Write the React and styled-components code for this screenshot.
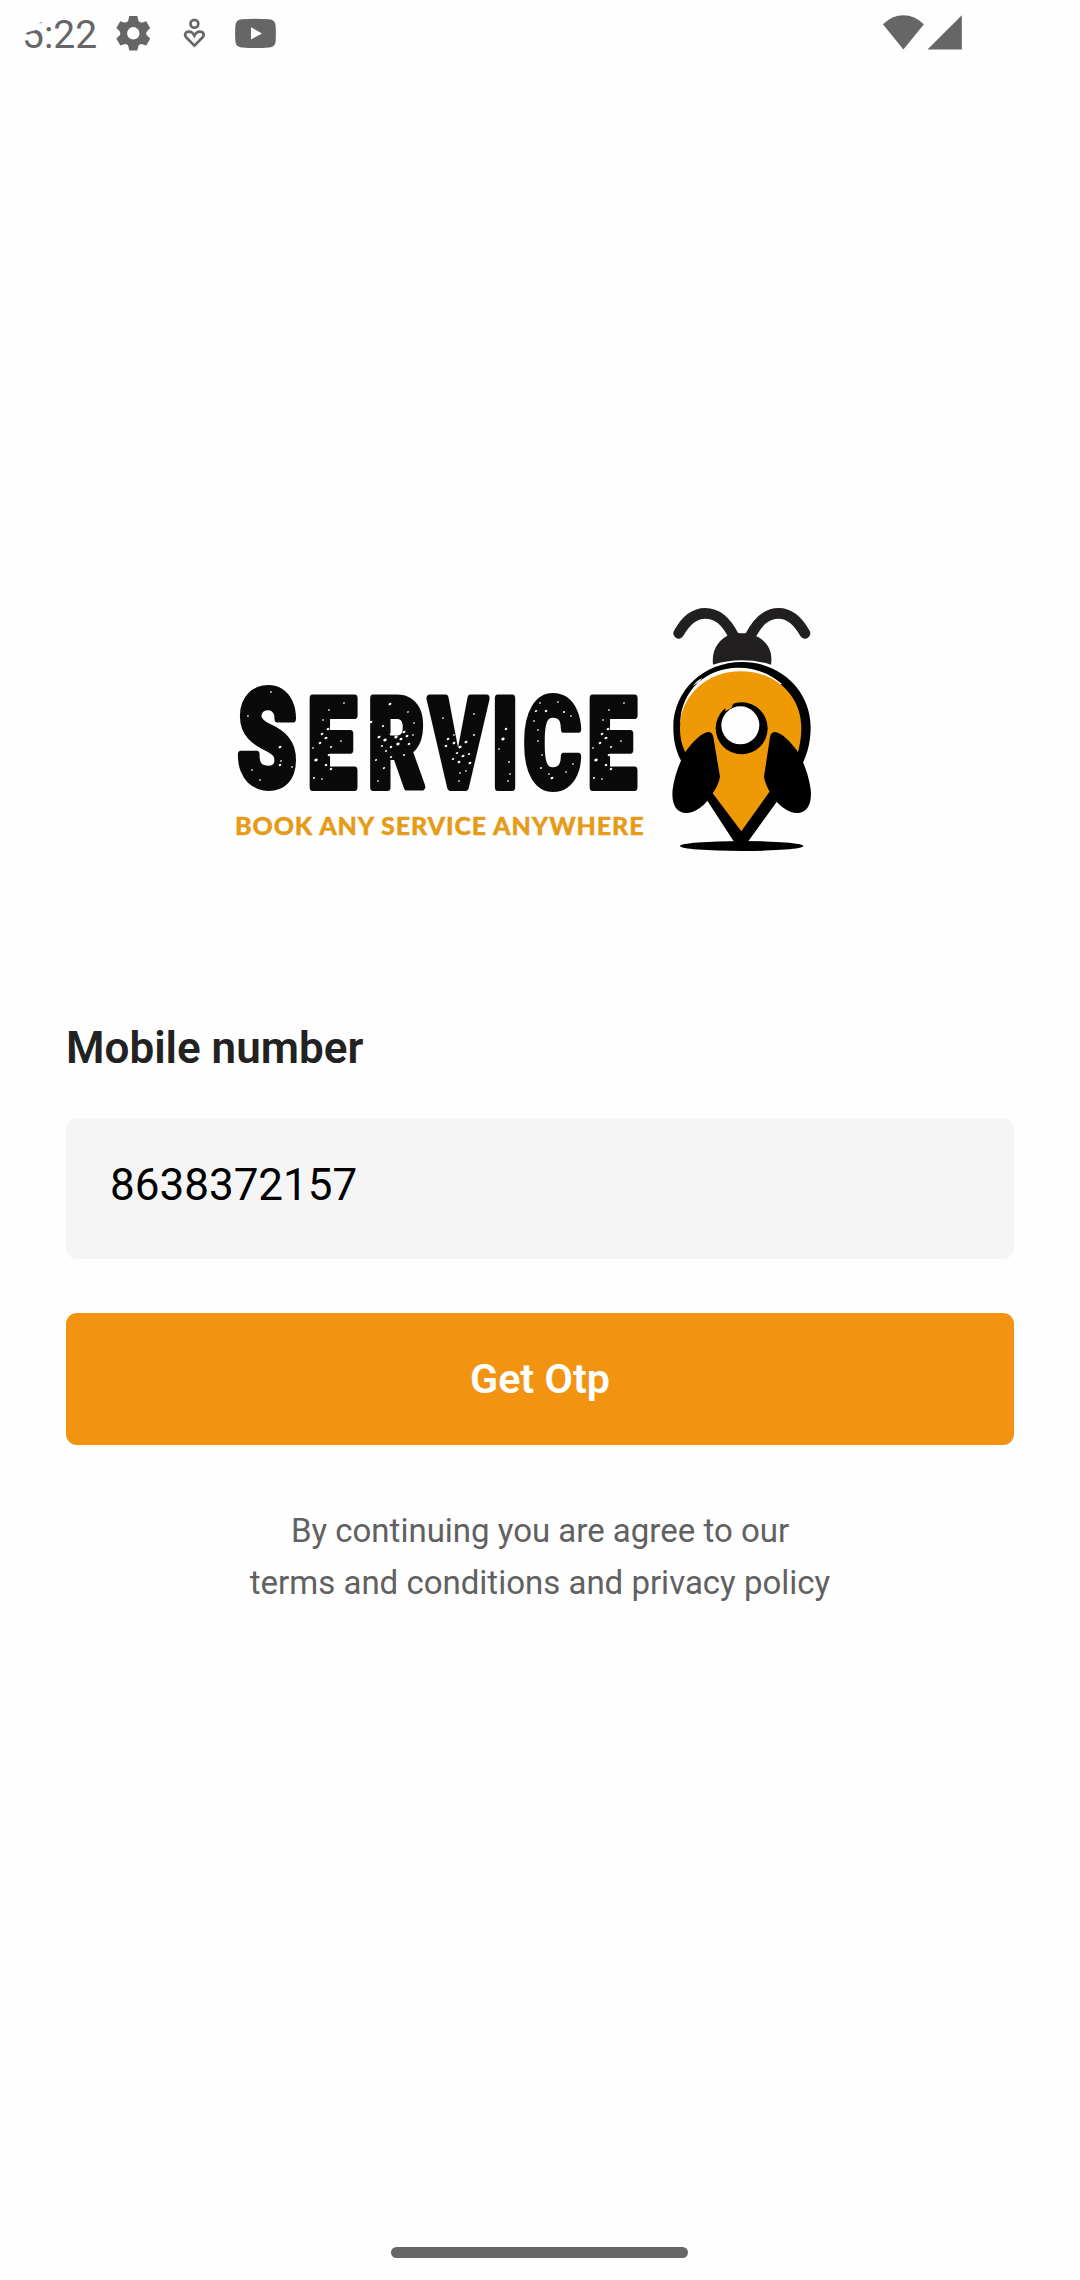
import React from 'react';
import styled, { createGlobalStyle } from 'styled-components';

const GlobalStyle = createGlobalStyle`
  * { box-sizing: border-box; }
  body { margin: 0; background: #fefefe; font-family: Roboto, "Liberation Sans", sans-serif; }
`;

const Screen = styled.main`
  width: 1080px;
  height: 2280px;
  background: #fefefe;
  display: flex;
  flex-direction: column;
  overflow: hidden;
`;

const StatusBar = styled.header`
  height: 66px;
  padding: 0 118px 0 22px;
  display: flex;
  justify-content: space-between;
  align-items: flex-start;
  color: #666;
`;

const StatusGroup = styled.div`
  height: 66px;
  display: flex;
  align-items: center;
`;

const Clock = styled.span`
  position: relative;
  width: 94px;
  height: 66px;
  padding-top: 2px;
  font-size: 39px;
  line-height: 66px;
`;

const CornerCut = styled.svg`
  position: absolute;
  left: -2px;
  top: 12px;
`;

const Glyph = styled.svg`
  display: block;
  flex: none;
  height: 66px;
  width: ${({ $w }) => $w}px;
`;

const Content = styled.section`
  flex: 1;
  padding: 530px 66px 0;
  display: flex;
  flex-direction: column;
`;

const Logo = styled.svg`
  display: block;
  width: 600px;
  height: 270px;
  margin-left: 160px;
  flex: none;
`;

const Label = styled.label`
  margin-top: 156px;
  height: 52px;
  font-size: 44px;
  line-height: 52px;
  font-weight: 600;
  color: #222;
`;

const Field = styled.div`
  margin-top: 44px;
  height: 140.5px;
  border-radius: 11px;
  background: #f5f5f5;
  padding: 41px 44px;
  font-size: 44px;
  line-height: 52px;
  color: #000;
`;

const Button = styled.button`
  margin: 54.5px 0 0;
  padding: 1px 0 0;
  height: 132px;
  border: 0;
  border-radius: 11px;
  background: #f29411;
  color: #fff;
  font: 600 41.25px/131px Roboto, "Liberation Sans", sans-serif;
`;

const Terms = styled.p`
  margin: 60px 0 0;
  text-align: center;
  font-size: 33px;
  line-height: 52px;
  color: #616161;
`;

const NavBar = styled.footer`
  height: 33px;
  padding-right: 1px;
  display: flex;
  justify-content: center;
  align-items: flex-start;
`;

const NavHandle = styled.div`
  width: 297px;
  height: 11px;
  border-radius: 6px;
  background: #666;
`;

const specks = [
  [271, 692, 1], [248, 716, 1], [280, 747, 1.5], [252, 770, 1], [260, 780, 1], [292, 767, 1], [280, 765, 1.4], [281, 761, 1],
  [371, 722, 1.5], [383, 726, 1.3], [390, 704, 1.5], [379, 737, 1.6], [385, 740, 1.8], [391, 734, 1.4], [396, 737, 1.8], [401, 739, 1.6], [407, 736, 1.5], [398, 744, 1.8], [391, 747, 1.4], [404, 732, 1.6], [409, 744, 1.4], [386, 751, 1.2], [391, 757, 1.3], [376, 760, 1.2], [384, 768, 1.3], [404, 755, 1.2], [378, 781, 1], [414, 723, 1], [408, 712, 1], [382, 746, 1.2], [413, 735, 1],
  [448, 739, 1.4], [446, 746, 1.4], [454, 743, 1.5], [460, 747, 1.7], [466, 742, 1.6], [457, 753, 1.3], [463, 756, 1.6], [453, 759, 1.3], [469, 754, 1.3], [459, 762, 1.5], [470, 763, 1.5], [460, 773, 1], [474, 735, 1.1], [474, 714, 1], [443, 718, 1], [454, 735, 1], [466, 771, 1], [459, 781, 1],
  [506, 729, 1.4], [503, 739, 1.8], [499, 749, 1], [509, 762, 1], [510, 774, 1], [508, 781, 1],
  [536, 711, 1.3], [546, 711, 1.4], [540, 703, 1], [534, 721, 1], [538, 730, 1], [538, 741, 1], [542, 755, 1], [541, 768, 1.1], [549, 774, 1], [552, 778, 1.6], [566, 772, 1], [573, 764, 1], [564, 712, 1.2], [571, 716, 1], [558, 702, 1],
];

// wear marks shared by both copies of the letter E
const wornE = [[0, 0, 1], [9, -14, 1.4], [13, -10, 1.6], [7, -5, 1.4], [15, -19, 1.5], [3, 12, 1.9], [16, 7, 1.4], [13, 17, 1.4], [18, 21, 1.4], [1, 30, 1.2], [9, 31, 1], [31, -45, 1], [28, -7, 1], [18, -1, 1.2], [10, -28, 1], [16, -38, 1]];

const marks = [
  ...specks,
  ...wornE.map(([x, y, r]) => [313 + x, 748 + y, r]),
  ...wornE.map(([x, y, r]) => [593 + x, 748 + y, r]),
];

function BrandLogo() {
  return (
    <Logo viewBox="226 596 600 270">
      <g transform="scale(0.7 1)">
        <text
          x="339.5 439.5 526 613.5 703 748.5 839.5"
          y="786 787"
          fontFamily="Roboto, sans-serif"
          fontWeight="900"
          fontSize="123.5"
          fill="#0a0a0a"
          stroke="#0a0a0a"
          strokeWidth="8"
          strokeLinejoin="round"
        >
          <tspan fontSize="134">S</tspan>ERVICE
        </text>
      </g>
      <g fill="#fefefe">
        {marks.map(([x, y, r], i) => (
          <ellipse key={i} cx={x} cy={y} rx={r} ry={r * 0.72} transform={`rotate(-25 ${x} ${y})`} />
        ))}
      </g>
      <text
        x="235"
        y="834.9"
        fontFamily="Lato, sans-serif"
        fontWeight="900"
        fontSize="25"
        fill="#e59b18"
        stroke="#e59b18"
        strokeWidth="0.4"
        textLength="408.5"
        lengthAdjust="spacing"
      >
        BOOK ANY SERVICE ANYWHERE
      </text>
      <g transform="translate(650 590) scale(0.33333)">
        <path d="M86 130C112 82 140 70 166 70C205 70 230 96 252 140M465 130C438 82 412 70 386 70C347 70 322 96 300 140" fill="none" stroke="#221f21" strokeWidth="32" strokeLinecap="round" />
        <path d="M189 224C184 178 207 146 244 132Q262 126 270 130H284Q300 126 312 136C349 150 370 180 363 224C310 206 240 206 189 224Z" fill="#221f21" />
        <path d="M70 412C70 302 160 216 276 216C392 216 482 302 482 412C482 452 474 488 458 520L380 636L296 752Q274 770 250 752L172 632L94 514C78 484 70 452 70 412Z" fill="#000" />
        <path d="M91 396C94 304 166 234 264 233C318 233 362 252 396 282L272 330L110 400Z" fill="#fefefe" />
        <path d="M90 412C92 312 174 244 272 244C376 244 454 316 454 414C454 440 450 464 444 486L358 606L274 724L188 610L106 486C94 464 90 440 90 412Z" fill="#ef9a05" />
        <path d="M128 288Q142 270 158 263L147 276Z" fill="#fefefe" />
        <circle cx="275" cy="415" r="78" fill="#000" />
        <path d="M226 350Q238 342 250 341L244 354L226 364Z" fill="#ef9a05" />
        <circle cx="271" cy="406" r="57" fill="#fefefe" />
        <path d="M174 426Q188 426 190 442L210 560Q206 584 188 610C166 650 130 672 104 669C74 666 64 634 68 598C74 550 96 500 112 478C134 450 154 430 174 426Z" fill="#000" />
        <path d="M376 426Q362 426 360 442L342 560Q346 584 362 610C384 650 420 672 446 669C476 666 486 634 482 598C476 550 454 500 438 478C416 450 396 430 376 426Z" fill="#000" />
        <ellipse cx="275" cy="768" rx="185" ry="15" fill="#000" />
      </g>
    </Logo>
  );
}

const toothAngles = [0, 60, 120, 180, 240, 300];

export default function App() {
  return (
    <>
      <GlobalStyle />
      <Screen>
        <StatusBar>
          <StatusGroup>
            <Clock>
              5:22
              <CornerCut width="24" height="24" viewBox="20 12 24 24">
                <path d="M20 12H44V20.5L37.5 24.2L41.5 23.4V25L36 30L30 31.5L20 35Z" fill="#fefefe" />
              </CornerCut>
            </Clock>
            <Glyph $w={34} viewBox="116 0 34 66" fill="#666">
              <path
                fillRule="evenodd"
                d="M133.3 20.3A13 13 0 1 0 133.3 46.3A13 13 0 1 0 133.3 20.3ZM133.3 27.1A6.2 6.2 0 1 1 133.3 39.5A6.2 6.2 0 1 1 133.3 27.1Z"
              />
              {toothAngles.map((a) => (
                <path key={a} d="M129.3 16H137.3L138.2 20L140 24H126.6L128.4 20Z" transform={`rotate(${a} 133.3 33.3)`} />
              ))}
            </Glyph>
            <Glyph $w={85} viewBox="150 0 85 66" fill="none" stroke="#666" strokeWidth="2.7">
              <circle cx="194.4" cy="23.7" r="3.9" />
              <path d="M194.4 45.6L186.6 37.8C183.6 34.6 185.6 31.6 188.9 31.6C191.6 31.6 193.2 33.2 194.4 35.6C195.6 33.2 197.2 31.6 199.9 31.6C203.2 31.6 205.2 34.6 202.2 37.8Z" />
            </Glyph>
            <Glyph $w={42} viewBox="235 0 42 66">
              <path d="M242 19.3Q255.5 18.3 269 19.3Q275.2 19.7 275.6 25.5Q276.2 33.5 275.6 41.5Q275.2 47.2 269 47.6Q255.5 48.6 242 47.6Q235.8 47.2 235.4 41.5Q234.8 33.5 235.4 25.5Q235.8 19.7 242 19.3Z" fill="#666" />
              <path d="M251 27.3L262 33.4L251 39.5Z" fill="#fefefe" />
            </Glyph>
          </StatusGroup>
          <StatusGroup>
            <Glyph $w={80} viewBox="882 0 80 66" fill="#666">
              <path d="M903.4 49.4L882.9 24.3Q892 15.2 903.4 15.2Q914.8 15.2 923.9 24.3Z" />
              <path d="M927.5 49.5L961.8 15.3V49.5Z" />
            </Glyph>
          </StatusGroup>
        </StatusBar>
        <Content>
          <BrandLogo />
          <Label>Mobile number</Label>
          <Field>8638372157</Field>
          <Button>Get Otp</Button>
          <Terms>
            By continuing you are agree to our
            <br />
            terms and conditions and privacy policy
          </Terms>
        </Content>
        <NavBar>
          <NavHandle />
        </NavBar>
      </Screen>
    </>
  );
}
